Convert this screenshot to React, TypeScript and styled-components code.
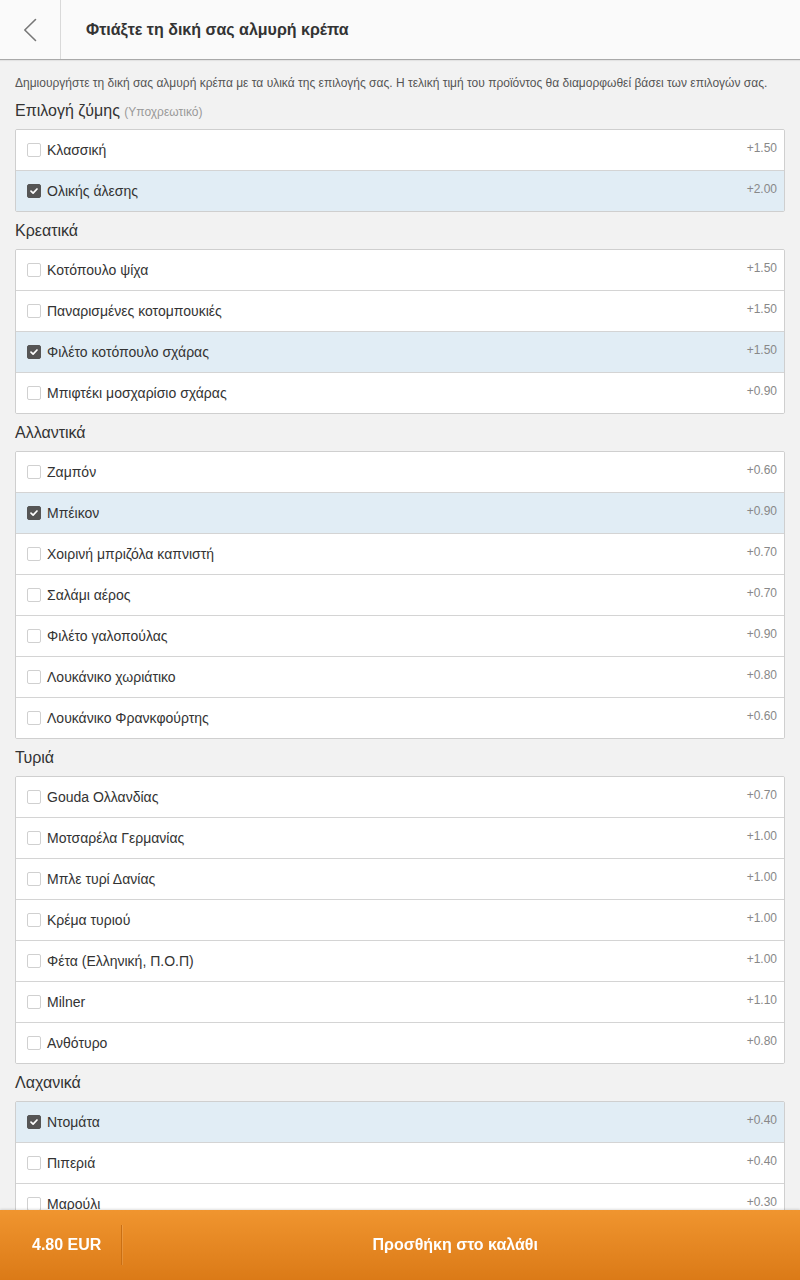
import React from "react";
import styled, { createGlobalStyle } from "styled-components";

const GlobalStyle = createGlobalStyle`
  html, body { margin: 0; padding: 0; }
  body {
    background: #f2f2f2;
    font-family: "Liberation Sans", Arial, sans-serif;
    color: #333;
  }
  * { box-sizing: border-box; }
`;

type Item = { name: string; price: string; checked?: boolean };
type Section = { title: string; note?: string; items: Item[] };

const sections: Section[] = [
  {
    title: "Επιλογή ζύμης",
    note: "(Υποχρεωτικό)",
    items: [
      { name: "Κλασσική", price: "+1.50" },
      { name: "Ολικής άλεσης", price: "+2.00", checked: true },
    ],
  },
  {
    title: "Κρεατικά",
    items: [
      { name: "Κοτόπουλο ψίχα", price: "+1.50" },
      { name: "Παναρισμένες κοτομπουκιές", price: "+1.50" },
      { name: "Φιλέτο κοτόπουλο σχάρας", price: "+1.50", checked: true },
      { name: "Μπιφτέκι μοσχαρίσιο σχάρας", price: "+0.90" },
    ],
  },
  {
    title: "Αλλαντικά",
    items: [
      { name: "Ζαμπόν", price: "+0.60" },
      { name: "Μπέικον", price: "+0.90", checked: true },
      { name: "Χοιρινή μπριζόλα καπνιστή", price: "+0.70" },
      { name: "Σαλάμι αέρος", price: "+0.70" },
      { name: "Φιλέτο γαλοπούλας", price: "+0.90" },
      { name: "Λουκάνικο χωριάτικο", price: "+0.80" },
      { name: "Λουκάνικο Φρανκφούρτης", price: "+0.60" },
    ],
  },
  {
    title: "Τυριά",
    items: [
      { name: "Gouda Ολλανδίας", price: "+0.70" },
      { name: "Μοτσαρέλα Γερμανίας", price: "+1.00" },
      { name: "Μπλε τυρί Δανίας", price: "+1.00" },
      { name: "Κρέμα τυριού", price: "+1.00" },
      { name: "Φέτα (Ελληνική, Π.Ο.Π)", price: "+1.00" },
      { name: "Milner", price: "+1.10" },
      { name: "Ανθότυρο", price: "+0.80" },
    ],
  },
  {
    title: "Λαχανικά",
    items: [
      { name: "Ντομάτα", price: "+0.40", checked: true },
      { name: "Πιπεριά", price: "+0.40" },
      { name: "Μαρούλι", price: "+0.30" },
      { name: "Κρεμμύδι", price: "+0.30" },
      { name: "Μανιτάρια", price: "+0.40" },
    ],
  },
];

const Page = styled.div`
  min-height: 100vh;
  padding-bottom: 80px;
`;

const Header = styled.header`
  display: flex;
  height: 60px;
  background: #fafafa;
  border-bottom: 1px solid #a9a9a9;
  box-shadow: 0 1px 1px rgba(0, 0, 0, 0.06);
`;

const BackButton = styled.button`
  width: 61px;
  height: 59px;
  flex: none;
  display: flex;
  align-items: center;
  justify-content: center;
  padding: 0;
  background: transparent;
  border: none;
  border-right: 1px solid #d9d9d9;
  cursor: pointer;
`;

const HeaderTitle = styled.h1`
  margin: 0;
  padding-left: 25px;
  display: flex;
  align-items: center;
  font-size: 16px;
  font-weight: bold;
  color: #333;
`;

const Content = styled.main`
  padding: 0 15px;
`;

const Description = styled.p`
  margin: 0;
  padding-top: 14px;
  font-size: 12px;
  line-height: 18px;
  color: #555;
  white-space: nowrap;
`;

const SectionTitle = styled.h2`
  margin: 0;
  padding: 8px 0;
  height: 37px;
  font-size: 16px;
  line-height: 21px;
  font-weight: normal;
  color: #333;
`;

const Note = styled.span`
  font-size: 12px;
  line-height: 0;
  color: #999;
`;

const Panel = styled.div`
  background: #fff;
  border: 1px solid #cfcfcf;
  border-radius: 2px;
  overflow: hidden;
`;

const Row = styled.label<{ $checked?: boolean }>`
  display: flex;
  align-items: flex-start;
  height: 41px;
  padding: 0 7px 0 11px;
  background: ${(p) => (p.$checked ? "#e1edf5" : "#fff")};
  border-top: 1px solid #d4d4d4;
  &:first-child {
    border-top: none;
    height: 40px;
  }
`;

const Box = styled.span<{ $checked?: boolean }>`
  flex: none;
  width: 14px;
  height: 14px;
  margin-top: 13px;
  border-radius: 2px;
  display: flex;
  align-items: center;
  justify-content: center;
  border: 1px solid ${(p) => (p.$checked ? "#555" : "#d0d0d0")};
  background: ${(p) => (p.$checked ? "#555" : "#fff")};
`;

const Label = styled.span`
  flex: 1;
  margin-left: 6px;
  font-size: 14px;
  line-height: 40px;
  color: #333;
`;

const Price = styled.span`
  padding-top: 10px;
  font-size: 12px;
  line-height: 17px;
  color: #888;
`;

const Footer = styled.footer`
  position: fixed;
  left: 0;
  right: 0;
  bottom: 0;
  height: 70px;
  display: flex;
  align-items: center;
  background: linear-gradient(#f0952f, #db7a17);
  box-shadow: 0 -1px 2px rgba(0, 0, 0, 0.12);
  color: #fff;
  font-weight: bold;
  font-size: 16px;
`;

const Total = styled.div`
  height: 40px;
  display: flex;
  align-items: center;
  padding: 0 20px 0 32px;
  border-right: 1px solid #c96f14;
  box-shadow: 1px 0 0 rgba(255, 255, 255, 0.12);
`;

const AddButton = styled.button`
  flex: 1;
  height: 100%;
  padding: 0 12px 0 0;
  background: transparent;
  border: none;
  color: #fff;
  font-family: inherit;
  font-weight: bold;
  font-size: 16px;
  cursor: pointer;
`;

const Check = () => (
  <svg width="10" height="10" viewBox="0 0 10 10">
    <path d="M2 5.2 L4.1 7.2 L8 3" fill="none" stroke="#fff" strokeWidth="1.7" strokeLinecap="round" strokeLinejoin="round" />
  </svg>
);

const Chevron = () => (
  <svg width="14" height="24" viewBox="0 0 14 24">
    <path d="M12.5 1.5 L1.8 12 L12.5 22.5" fill="none" stroke="#777" strokeWidth="1.6" strokeLinecap="round" strokeLinejoin="round" />
  </svg>
);

export default function App() {
  return (
    <Page>
      <GlobalStyle />
      <Header>
        <BackButton aria-label="back">
          <Chevron />
        </BackButton>
        <HeaderTitle>Φτιάξτε τη δική σας αλμυρή κρέπα</HeaderTitle>
      </Header>
      <Content>
        <Description>
          Δημιουργήστε τη δική σας αλμυρή κρέπα με τα υλικά της επιλογής σας. Η τελική τιμή του προϊόντος θα διαμορφωθεί βάσει των επιλογών σας.
        </Description>
        {sections.map((s) => (
          <section key={s.title}>
            <SectionTitle>
              {s.title} {s.note && <Note>{s.note}</Note>}
            </SectionTitle>
            <Panel>
              {s.items.map((it) => (
                <Row key={it.name} $checked={it.checked}>
                  <Box $checked={it.checked}>{it.checked && <Check />}</Box>
                  <Label>{it.name}</Label>
                  <Price>{it.price}</Price>
                </Row>
              ))}
            </Panel>
          </section>
        ))}
      </Content>
      <Footer>
        <Total>4.80 EUR</Total>
        <AddButton>Προσθήκη στο καλάθι</AddButton>
      </Footer>
    </Page>
  );
}
